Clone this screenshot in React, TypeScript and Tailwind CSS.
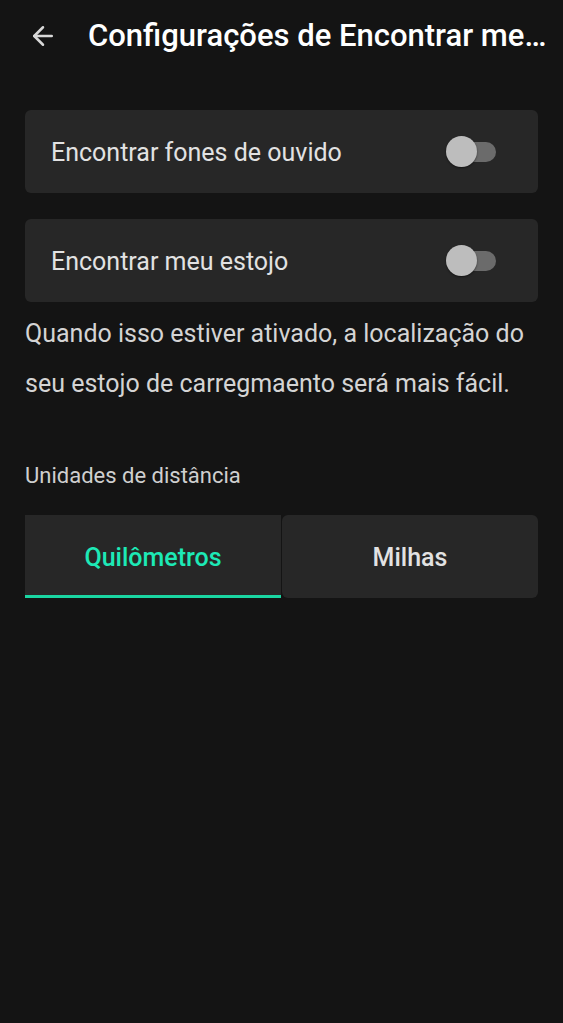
import { ArrowLeft } from 'lucide-react';

function Toggle() {
  return (
    <div className="relative w-[50px] h-[32px] flex items-center">
      <div className="absolute left-[9px] w-[41px] h-[20px] rounded-full bg-[#6b6b6b]" />
      <div className="absolute left-0 w-[31px] h-[31px] rounded-full bg-[#bdbdbd] shadow-[0_1px_2px_rgba(0,0,0,0.5)]" />
    </div>
  );
}

function ToggleCard({ label }: { label: string }) {
  return (
    <div className="h-[83px] rounded-[6px] bg-[#272727] flex items-center justify-between pl-[26px] pr-[42px]">
      <span className="text-[25px] leading-[30px] pt-[2px] text-[#e2e2e2]">{label}</span>
      <Toggle />
    </div>
  );
}

export default function App() {
  return (
    <div className="min-h-[1023px] bg-[#141414] font-['Roboto',sans-serif]">
      <header className="h-[72px] flex items-center pl-[28px] pr-[14px]">
        <ArrowLeft className="w-[30px] h-[30px] text-[#d8d8d8] shrink-0" strokeWidth={2} />
        <h1 className="ml-[30px] text-[31px] leading-[38px] font-medium text-white truncate">
          Configurações de Encontrar meu estojo
        </h1>
      </header>

      <main className="px-[25px] pt-[38px]">
        <div className="flex flex-col gap-[26px]">
          <ToggleCard label="Encontrar fones de ouvido" />
          <ToggleCard label="Encontrar meu estojo" />
        </div>

        <p className="mt-[7px] text-[25px] leading-[50px] text-[#d4d4d4]">
          Quando isso estiver ativado, a localização do seu estojo de carregmaento será mais fácil.
        </p>

        <h2 className="mt-[53px] text-[22px] leading-[28px] text-[#cfcfcf]">Unidades de distância</h2>

        <div className="mt-[25px] flex gap-[1px]">
          <button className="flex-1 h-[83px] pt-[5px] bg-[#272727] border-b-[3px] border-[#1ad6a2] text-[25px] font-medium text-[#1de9b6]">
            Quilômetros
          </button>
          <button className="flex-1 h-[83px] pt-[3px] bg-[#272727] rounded-[6px] text-[25px] font-medium text-[#e2e2e2]">
            Milhas
          </button>
        </div>
      </main>
    </div>
  );
}
